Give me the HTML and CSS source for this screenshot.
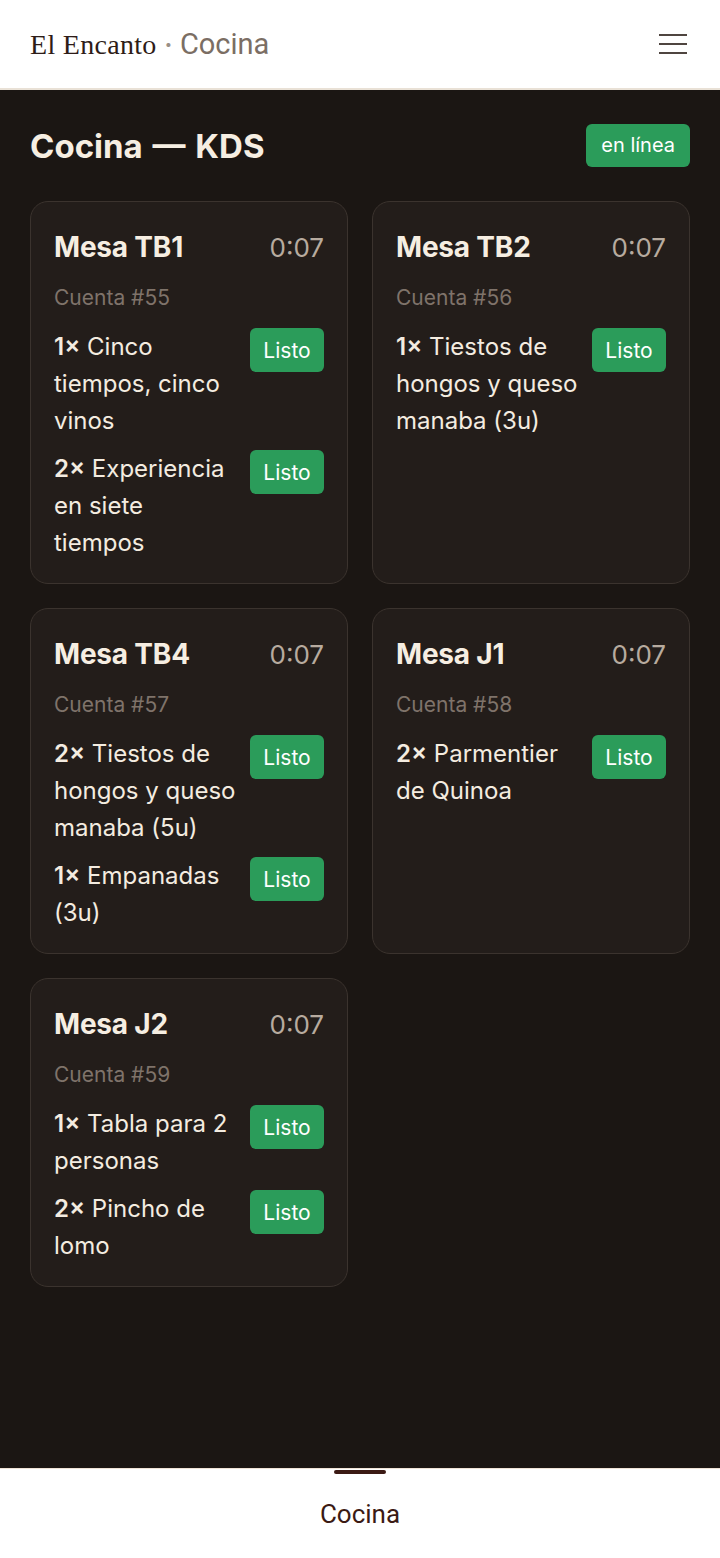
FILE: index.html
```html
<!DOCTYPE html>
<html lang="es">
<head>
    <meta charset="UTF-8">
    <meta name="viewport" content="width=device-width, initial-scale=1.0">
    <title>El Encanto · Cocina</title>
    <link rel="stylesheet" href="styles.css">
</head>
<body>

<header class="topbar">
    <div class="brand">
        <span class="brand-name">El Encanto</span>
        <span class="brand-dot">•</span>
        <span class="brand-section">Cocina</span>
    </div>
    <button class="menu-btn" aria-label="Menú">
        <svg width="30" height="20" viewBox="0 0 30 20">
            <path d="M1 1h28M1 10h28M1 19h28" stroke="#4f4540" stroke-width="2.2" fill="none"/>
        </svg>
    </button>
</header>

<main class="kds">
    <div class="kds-head">
        <h1>Cocina — KDS</h1>
        <span class="status">en línea</span>
    </div>

    <div class="tickets">
        <div class="ticket">
            <div class="ticket-top">
                <span class="table">Mesa TB1</span>
                <span class="timer">0:07</span>
            </div>
            <div class="account">Cuenta #55</div>
            <div class="item">
                <span class="item-name"><b class="qty">1×</b> Cinco tiempos, cinco vinos</span>
                <button class="ready">Listo</button>
            </div>
            <div class="item">
                <span class="item-name"><b class="qty">2×</b> Experiencia en siete tiempos</span>
                <button class="ready">Listo</button>
            </div>
        </div>

        <div class="ticket">
            <div class="ticket-top">
                <span class="table">Mesa TB2</span>
                <span class="timer">0:07</span>
            </div>
            <div class="account">Cuenta #56</div>
            <div class="item">
                <span class="item-name"><b class="qty">1×</b> Tiestos de hongos y queso manaba (3u)</span>
                <button class="ready">Listo</button>
            </div>
        </div>

        <div class="ticket">
            <div class="ticket-top">
                <span class="table">Mesa TB4</span>
                <span class="timer">0:07</span>
            </div>
            <div class="account">Cuenta #57</div>
            <div class="item">
                <span class="item-name"><b class="qty">2×</b> Tiestos de hongos y queso manaba (5u)</span>
                <button class="ready">Listo</button>
            </div>
            <div class="item">
                <span class="item-name"><b class="qty">1×</b> Empanadas (3u)</span>
                <button class="ready">Listo</button>
            </div>
        </div>

        <div class="ticket">
            <div class="ticket-top">
                <span class="table">Mesa J1</span>
                <span class="timer">0:07</span>
            </div>
            <div class="account">Cuenta #58</div>
            <div class="item">
                <span class="item-name"><b class="qty">2×</b> Parmentier de Quinoa</span>
                <button class="ready">Listo</button>
            </div>
        </div>

        <div class="ticket">
            <div class="ticket-top">
                <span class="table">Mesa J2</span>
                <span class="timer">0:07</span>
            </div>
            <div class="account">Cuenta #59</div>
            <div class="item">
                <span class="item-name"><b class="qty">1×</b> Tabla para 2 personas</span>
                <button class="ready">Listo</button>
            </div>
            <div class="item">
                <span class="item-name"><b class="qty">2×</b> Pincho de lomo</span>
                <button class="ready">Listo</button>
            </div>
        </div>
    </div>
</main>

<nav class="bottom-nav">
    <a class="tab active" href="#">Cocina</a>
</nav>

</body>
</html>
```

FILE: styles.css
```css
html, body {
    margin: 0;
    padding: 0;
}
body {
    font-family: Inter, "Noto Sans", sans-serif;
    background: #1b1613;
    color: #f4ece0;
    min-height: 100vh;
    display: flex;
    flex-direction: column;
}
.topbar {
    background: #fff;
    height: 88px;
    border-bottom: 2px solid #e9e1d6;
    display: flex;
    align-items: center;
    justify-content: space-between;
    padding: 0 30px;
}
.brand {
    display: flex;
    align-items: baseline;
    gap: 8px;
}
.brand-name {
    font-family: "Liberation Serif", serif;
    font-size: 28px;
    color: #2e1c18;
    letter-spacing: 0.3px;
}
.brand-dot {
    color: #9a8f86;
    font-size: 13px;
    position: relative;
    top: -5px;
}
.brand-section {
    font-family: Roboto, sans-serif;
    font-size: 29px;
    color: #7b6e64;
}
.menu-btn {
    background: none;
    border: none;
    padding: 0;
    margin-right: 2px;
    cursor: pointer;
    display: flex;
}
.kds {
    flex: 1;
    padding: 34px 30px 40px;
}
.kds-head {
    display: flex;
    justify-content: space-between;
    align-items: center;
    margin-bottom: 34px;
}
.kds-head h1 {
    margin: 0;
    font-size: 33px;
    font-weight: 700;
    word-spacing: 2px;
    color: #f6eee2;
}
.status {
    background: #2b9c5a;
    color: #fff;
    font-size: 20px;
    padding: 0 15px;
    height: 43px;
    line-height: 43px;
    border-radius: 6px;
}
.tickets {
    display: grid;
    grid-template-columns: 1fr 1fr;
    gap: 24px;
}
.ticket {
    background: #231d1a;
    border: 1px solid #3b332e;
    border-radius: 18px;
    padding: 24px 23px 22px;
}
.ticket-top {
    display: flex;
    justify-content: space-between;
    align-items: center;
    height: 42px;
}
.table {
    font-size: 28px;
    font-weight: 700;
    letter-spacing: -0.2px;
    color: #f6eee2;
}
.timer {
    font-size: 26px;
    color: #b7ab9f;
}
.account {
    font-size: 21px;
    color: #7f736a;
    margin-top: 17px;
    margin-bottom: 18px;
}
.item {
    display: flex;
    justify-content: space-between;
    align-items: flex-start;
    gap: 12px;
    margin-top: 11px;
}
.item-name {
    font-size: 24px;
    line-height: 37px;
    color: #f4ece0;
}
.qty {
    font-weight: 600;
}
.ready {
    flex: none;
    width: 74px;
    height: 44px;
    background: #2b9c5a;
    color: #fff;
    border: none;
    border-radius: 6px;
    font-family: Inter, sans-serif;
    font-size: 21px;
    cursor: pointer;
}
.bottom-nav {
    background: #fff;
    border-top: 1px solid #efe3d6;
    height: 89px;
    display: flex;
    justify-content: center;
}
.tab {
    position: relative;
    color: #3b1a14;
    text-decoration: none;
    font-family: Roboto, sans-serif;
    font-size: 26px;
    padding-top: 30px;
}
.tab.active::before {
    content: "";
    position: absolute;
    top: 1px;
    left: 50%;
    margin-left: -26px;
    width: 52px;
    height: 4px;
    border-radius: 2px;
    background: #3b1a14;
}
```
